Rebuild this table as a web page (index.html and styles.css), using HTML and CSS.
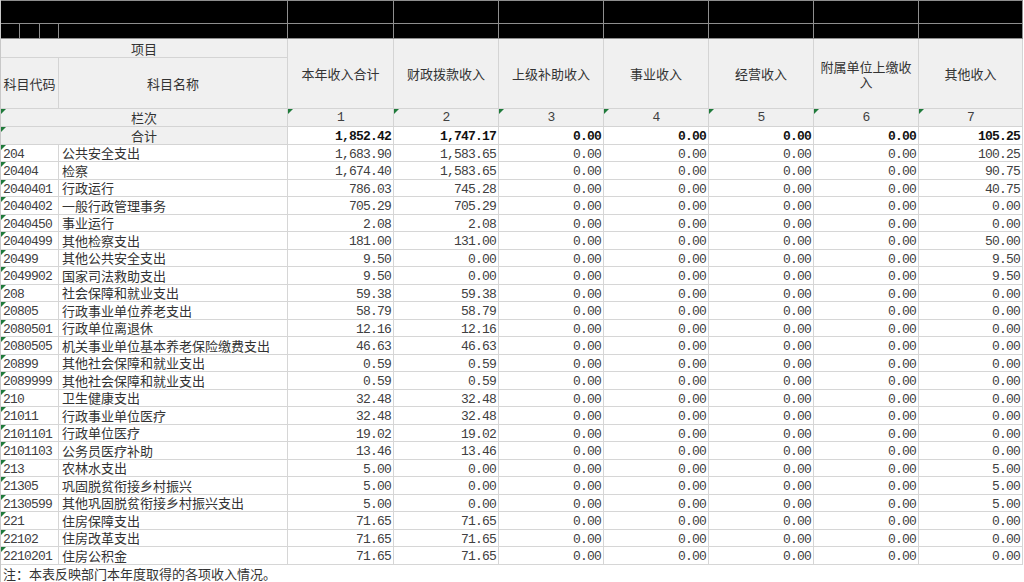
FILE: index.html
```html
<!DOCTYPE html>
<html lang="zh-CN">
<head>
<meta charset="utf-8">
<title>部门收入总表</title>
<link rel="stylesheet" href="styles.css">
</head>
<body>
<table class="sheet">
  <colgroup>
    <col class="c-a1"><col class="c-a2"><col class="c-a3"><col class="c-b">
    <col class="c-n1"><col class="c-n"><col class="c-n"><col class="c-n"><col class="c-n"><col class="c-n"><col class="c-n7">
  </colgroup>
  <tr class="blk blk1">
    <td colspan="4"></td><td></td><td></td><td></td><td></td><td></td><td></td><td></td>
  </tr>
  <tr class="blk blk2">
    <td></td><td></td><td></td><td></td><td></td><td></td><td></td><td></td><td></td><td></td><td></td>
  </tr>
  <tr class="h1">
    <td colspan="4" class="hd ctr">项目</td>
    <td rowspan="2" class="hd ctr wrap">本年收入合计</td>
    <td rowspan="2" class="hd ctr wrap">财政拨款收入</td>
    <td rowspan="2" class="hd ctr wrap">上级补助收入</td>
    <td rowspan="2" class="hd ctr wrap">事业收入</td>
    <td rowspan="2" class="hd ctr wrap">经营收入</td>
    <td rowspan="2" class="hd ctr wrap">附属单位上缴收入</td>
    <td rowspan="2" class="hd ctr wrap">其他收入</td>
  </tr>
  <tr class="h2">
    <td colspan="3" class="hd ctr tight">科目代码</td>
    <td class="hd ctr">科目名称</td>
  </tr>
  <tr class="idx">
    <td colspan="4" class="hd ctr tri">栏次</td>
    <td class="hd ctr num tri">1</td><td class="hd ctr num tri">2</td><td class="hd ctr num tri">3</td><td class="hd ctr num tri">4</td><td class="hd ctr num tri">5</td><td class="hd ctr num tri">6</td><td class="hd ctr num tri">7</td>
  </tr>
  <tr class="row total">
    <td colspan="4" class="hd ctr tri">合计</td>
    <td class="num">1,852.42</td><td class="num">1,747.17</td><td class="num">0.00</td><td class="num">0.00</td><td class="num">0.00</td><td class="num">0.00</td><td class="num">105.25</td>
  </tr>
  <tr class="row"><td colspan="3" class="code tri">204</td><td class="name">公共安全支出</td><td class="num">1,683.90</td><td class="num">1,583.65</td><td class="num">0.00</td><td class="num">0.00</td><td class="num">0.00</td><td class="num">0.00</td><td class="num">100.25</td></tr>
  <tr class="row"><td colspan="3" class="code tri">20404</td><td class="name">检察</td><td class="num">1,674.40</td><td class="num">1,583.65</td><td class="num">0.00</td><td class="num">0.00</td><td class="num">0.00</td><td class="num">0.00</td><td class="num">90.75</td></tr>
  <tr class="row"><td colspan="3" class="code tri">2040401</td><td class="name">行政运行</td><td class="num">786.03</td><td class="num">745.28</td><td class="num">0.00</td><td class="num">0.00</td><td class="num">0.00</td><td class="num">0.00</td><td class="num">40.75</td></tr>
  <tr class="row"><td colspan="3" class="code tri">2040402</td><td class="name">一般行政管理事务</td><td class="num">705.29</td><td class="num">705.29</td><td class="num">0.00</td><td class="num">0.00</td><td class="num">0.00</td><td class="num">0.00</td><td class="num">0.00</td></tr>
  <tr class="row"><td colspan="3" class="code tri">2040450</td><td class="name">事业运行</td><td class="num">2.08</td><td class="num">2.08</td><td class="num">0.00</td><td class="num">0.00</td><td class="num">0.00</td><td class="num">0.00</td><td class="num">0.00</td></tr>
  <tr class="row"><td colspan="3" class="code tri">2040499</td><td class="name">其他检察支出</td><td class="num">181.00</td><td class="num">131.00</td><td class="num">0.00</td><td class="num">0.00</td><td class="num">0.00</td><td class="num">0.00</td><td class="num">50.00</td></tr>
  <tr class="row"><td colspan="3" class="code tri">20499</td><td class="name">其他公共安全支出</td><td class="num">9.50</td><td class="num">0.00</td><td class="num">0.00</td><td class="num">0.00</td><td class="num">0.00</td><td class="num">0.00</td><td class="num">9.50</td></tr>
  <tr class="row"><td colspan="3" class="code tri">2049902</td><td class="name">国家司法救助支出</td><td class="num">9.50</td><td class="num">0.00</td><td class="num">0.00</td><td class="num">0.00</td><td class="num">0.00</td><td class="num">0.00</td><td class="num">9.50</td></tr>
  <tr class="row"><td colspan="3" class="code tri">208</td><td class="name">社会保障和就业支出</td><td class="num">59.38</td><td class="num">59.38</td><td class="num">0.00</td><td class="num">0.00</td><td class="num">0.00</td><td class="num">0.00</td><td class="num">0.00</td></tr>
  <tr class="row"><td colspan="3" class="code tri">20805</td><td class="name">行政事业单位养老支出</td><td class="num">58.79</td><td class="num">58.79</td><td class="num">0.00</td><td class="num">0.00</td><td class="num">0.00</td><td class="num">0.00</td><td class="num">0.00</td></tr>
  <tr class="row"><td colspan="3" class="code tri">2080501</td><td class="name">行政单位离退休</td><td class="num">12.16</td><td class="num">12.16</td><td class="num">0.00</td><td class="num">0.00</td><td class="num">0.00</td><td class="num">0.00</td><td class="num">0.00</td></tr>
  <tr class="row"><td colspan="3" class="code tri">2080505</td><td class="name">机关事业单位基本养老保险缴费支出</td><td class="num">46.63</td><td class="num">46.63</td><td class="num">0.00</td><td class="num">0.00</td><td class="num">0.00</td><td class="num">0.00</td><td class="num">0.00</td></tr>
  <tr class="row"><td colspan="3" class="code tri">20899</td><td class="name">其他社会保障和就业支出</td><td class="num">0.59</td><td class="num">0.59</td><td class="num">0.00</td><td class="num">0.00</td><td class="num">0.00</td><td class="num">0.00</td><td class="num">0.00</td></tr>
  <tr class="row"><td colspan="3" class="code tri">2089999</td><td class="name">其他社会保障和就业支出</td><td class="num">0.59</td><td class="num">0.59</td><td class="num">0.00</td><td class="num">0.00</td><td class="num">0.00</td><td class="num">0.00</td><td class="num">0.00</td></tr>
  <tr class="row"><td colspan="3" class="code tri">210</td><td class="name">卫生健康支出</td><td class="num">32.48</td><td class="num">32.48</td><td class="num">0.00</td><td class="num">0.00</td><td class="num">0.00</td><td class="num">0.00</td><td class="num">0.00</td></tr>
  <tr class="row"><td colspan="3" class="code tri">21011</td><td class="name">行政事业单位医疗</td><td class="num">32.48</td><td class="num">32.48</td><td class="num">0.00</td><td class="num">0.00</td><td class="num">0.00</td><td class="num">0.00</td><td class="num">0.00</td></tr>
  <tr class="row"><td colspan="3" class="code tri">2101101</td><td class="name">行政单位医疗</td><td class="num">19.02</td><td class="num">19.02</td><td class="num">0.00</td><td class="num">0.00</td><td class="num">0.00</td><td class="num">0.00</td><td class="num">0.00</td></tr>
  <tr class="row"><td colspan="3" class="code tri">2101103</td><td class="name">公务员医疗补助</td><td class="num">13.46</td><td class="num">13.46</td><td class="num">0.00</td><td class="num">0.00</td><td class="num">0.00</td><td class="num">0.00</td><td class="num">0.00</td></tr>
  <tr class="row"><td colspan="3" class="code tri">213</td><td class="name">农林水支出</td><td class="num">5.00</td><td class="num">0.00</td><td class="num">0.00</td><td class="num">0.00</td><td class="num">0.00</td><td class="num">0.00</td><td class="num">5.00</td></tr>
  <tr class="row"><td colspan="3" class="code tri">21305</td><td class="name">巩固脱贫衔接乡村振兴</td><td class="num">5.00</td><td class="num">0.00</td><td class="num">0.00</td><td class="num">0.00</td><td class="num">0.00</td><td class="num">0.00</td><td class="num">5.00</td></tr>
  <tr class="row"><td colspan="3" class="code tri">2130599</td><td class="name">其他巩固脱贫衔接乡村振兴支出</td><td class="num">5.00</td><td class="num">0.00</td><td class="num">0.00</td><td class="num">0.00</td><td class="num">0.00</td><td class="num">0.00</td><td class="num">5.00</td></tr>
  <tr class="row"><td colspan="3" class="code tri">221</td><td class="name">住房保障支出</td><td class="num">71.65</td><td class="num">71.65</td><td class="num">0.00</td><td class="num">0.00</td><td class="num">0.00</td><td class="num">0.00</td><td class="num">0.00</td></tr>
  <tr class="row"><td colspan="3" class="code tri">22102</td><td class="name">住房改革支出</td><td class="num">71.65</td><td class="num">71.65</td><td class="num">0.00</td><td class="num">0.00</td><td class="num">0.00</td><td class="num">0.00</td><td class="num">0.00</td></tr>
  <tr class="row"><td colspan="3" class="code tri">2210201</td><td class="name">住房公积金</td><td class="num">71.65</td><td class="num">71.65</td><td class="num">0.00</td><td class="num">0.00</td><td class="num">0.00</td><td class="num">0.00</td><td class="num">0.00</td></tr>
</table>
<p class="note">注：本表反映部门本年度取得的各项收入情况。</p>
</body>
</html>
```

FILE: styles.css
```css
html, body {
  margin: 0;
  padding: 0;
  background: #ffffff;
}

body {
  font-family: "Noto Sans CJK SC", "Noto Sans CJK JP", sans-serif;
  font-size: 13px;
  color: #333333;
  border-left: 1px solid #c8c8c8;
  width: 1023px;
  height: 582px;
  box-sizing: border-box;
  overflow: hidden;
}

.sheet {
  border-collapse: collapse;
  table-layout: fixed;
  width: 1022px;
  margin-left: -1px;
}

.c-a1 { width: 19px; }
.c-a2 { width: 20px; }
.c-a3 { width: 19px; }
.c-b  { width: 229px; }
.c-n1 { width: 106px; }
.c-n  { width: 105px; }
.c-n7 { width: 104px; }

.sheet td {
  border: 1px solid #d6d6d6;
  padding: 0 3px;
  white-space: nowrap;
  overflow: hidden;
  position: relative;
  line-height: 15px;
  vertical-align: middle;
}

.blk td {
  background: #000000;
  border-color: #8e8e8e;
  padding: 0;
}
.sheet .blk1 td { height: 22px; }
.sheet .blk2 td { height: 14px; }

.h1 td { height: 18px; }
.h2 td { height: 50px; }
.idx td { height: 17px; }
.sheet .row td { height: 16.5px; }

.sheet .hd {
  background: #f0f0f0;
  border-color: #d4d4d4;
}

.ctr { text-align: center; }
.sheet td.wrap {
  white-space: normal;
  padding: 0 5px;
}
.sheet td.tight { padding: 0 1px; }

.sheet .num,
.sheet .code {
  font-family: "Liberation Mono", monospace;
  font-size: 13px;
  letter-spacing: -0.8px;
  color: #404040;
}

.sheet .row .num,
.sheet .row .code {
  height: 13.5px;
  padding-top: 3px;
  padding-bottom: 0;
  line-height: 13px;
  vertical-align: top;
}

.sheet .num { text-align: right; padding-right: 2px; }
.sheet .hd.num { text-align: center; padding-right: 3px; }
.sheet .code { text-align: left; padding-left: 2px; }
.sheet .name { text-align: left; padding-left: 3px; }

.sheet .total .num {
  font-weight: bold;
  color: #111111;
}

.tri::before {
  content: "";
  position: absolute;
  left: 0;
  top: 0;
  border-top: 5px solid #1f7a3a;
  border-right: 5px solid transparent;
}

.note {
  margin: 0;
  padding: 0 0 0 2px;
  line-height: 17px;
  font-size: 13px;
  color: #333333;
}
```
